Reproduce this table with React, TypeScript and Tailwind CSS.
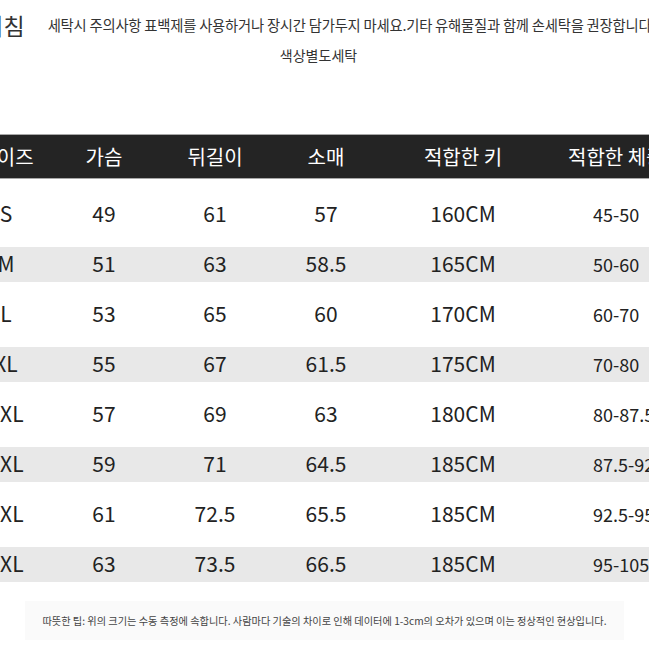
import React from 'react';

const rows = [
  { size: 'S', chest: '49', length: '61', sleeve: '57', height: '160CM', weight: '45-50' },
  { size: 'M', chest: '51', length: '63', sleeve: '58.5', height: '165CM', weight: '50-60' },
  { size: 'L', chest: '53', length: '65', sleeve: '60', height: '170CM', weight: '60-70' },
  { size: 'XL', chest: '55', length: '67', sleeve: '61.5', height: '175CM', weight: '70-80' },
  { size: '2XL', chest: '57', length: '69', sleeve: '63', height: '180CM', weight: '80-87.5' },
  { size: '3XL', chest: '59', length: '71', sleeve: '64.5', height: '185CM', weight: '87.5-92.5' },
  { size: '4XL', chest: '61', length: '72.5', sleeve: '65.5', height: '185CM', weight: '92.5-95' },
  { size: '5XL', chest: '63', length: '73.5', sleeve: '66.5', height: '185CM', weight: '95-105' },
];

const font = { fontFamily: '"Noto Sans CJK KR", "Noto Sans", sans-serif' };

const gridCols = 'grid grid-cols-[112px_84px_138px_84px_190px_160px] items-center';

export default function App() {
  return (
    <div className="w-[649px] h-[649px] overflow-hidden bg-white text-[#222]" style={font}>
      {/* care notice */}
      <div className="flex items-center ml-[-60px] pt-[10px] whitespace-nowrap">
        <span className="text-[23px] leading-[30px] text-[#333]">세탁지침</span>
        <span className="ml-[23px] text-[14.3px] text-[#333] tracking-[-0.2px]">
          세탁시 주의사항 표백제를 사용하거나 장시간 담가두지 마세요.기타 유해물질과 함께 손세탁을 권장합니다
        </span>
      </div>
      <div className="text-center text-[14px] text-[#333] mt-[5px] pr-[12px]">색상별도세탁</div>

      {/* size table */}
      <div className="ml-[-50px] w-[768px] mt-[68px]">
        <div className={`${gridCols} h-[45px] bg-[#242424] border-y border-[#a8a8a8] text-white text-[20px]`}>
          <div className="text-center">사이즈</div>
          <div className="text-center">가슴</div>
          <div className="text-center">뒤길이</div>
          <div className="text-center">소매</div>
          <div className="text-center">적합한 키</div>
          <div className="pl-[10px] whitespace-nowrap">적합한 체중</div>
        </div>
        <div className="mt-[10px]">
          {rows.map((r, i) => (
            <div key={r.size} className="h-[50px] flex items-center">
              <div className={`${gridCols} w-full h-[35px] ${i % 2 === 1 ? 'bg-[#e8e8e8]' : ''}`}>
                <div className="text-center text-[21px]">{r.size}</div>
                <div className="text-center text-[21px]">{r.chest}</div>
                <div className="text-center text-[21px]">{r.length}</div>
                <div className="text-center text-[21px]">{r.sleeve}</div>
                <div className="text-center text-[21px]">{r.height}</div>
                <div className="pl-[35px] text-[18px] whitespace-nowrap">{r.weight}</div>
              </div>
            </div>
          ))}
        </div>
      </div>

      {/* tip */}
      <div className="mx-[25px] mt-[12px] py-[12px] bg-[#fafafa] text-center text-[10.2px] text-[#444] whitespace-nowrap">
        따뜻한 팁: 위의 크기는 수동 측정에 속합니다. 사람마다 기술의 차이로 인해 데이터에 1-3cm의 오차가 있으며 이는 정상적인 현상입니다.
      </div>
    </div>
  );
}
